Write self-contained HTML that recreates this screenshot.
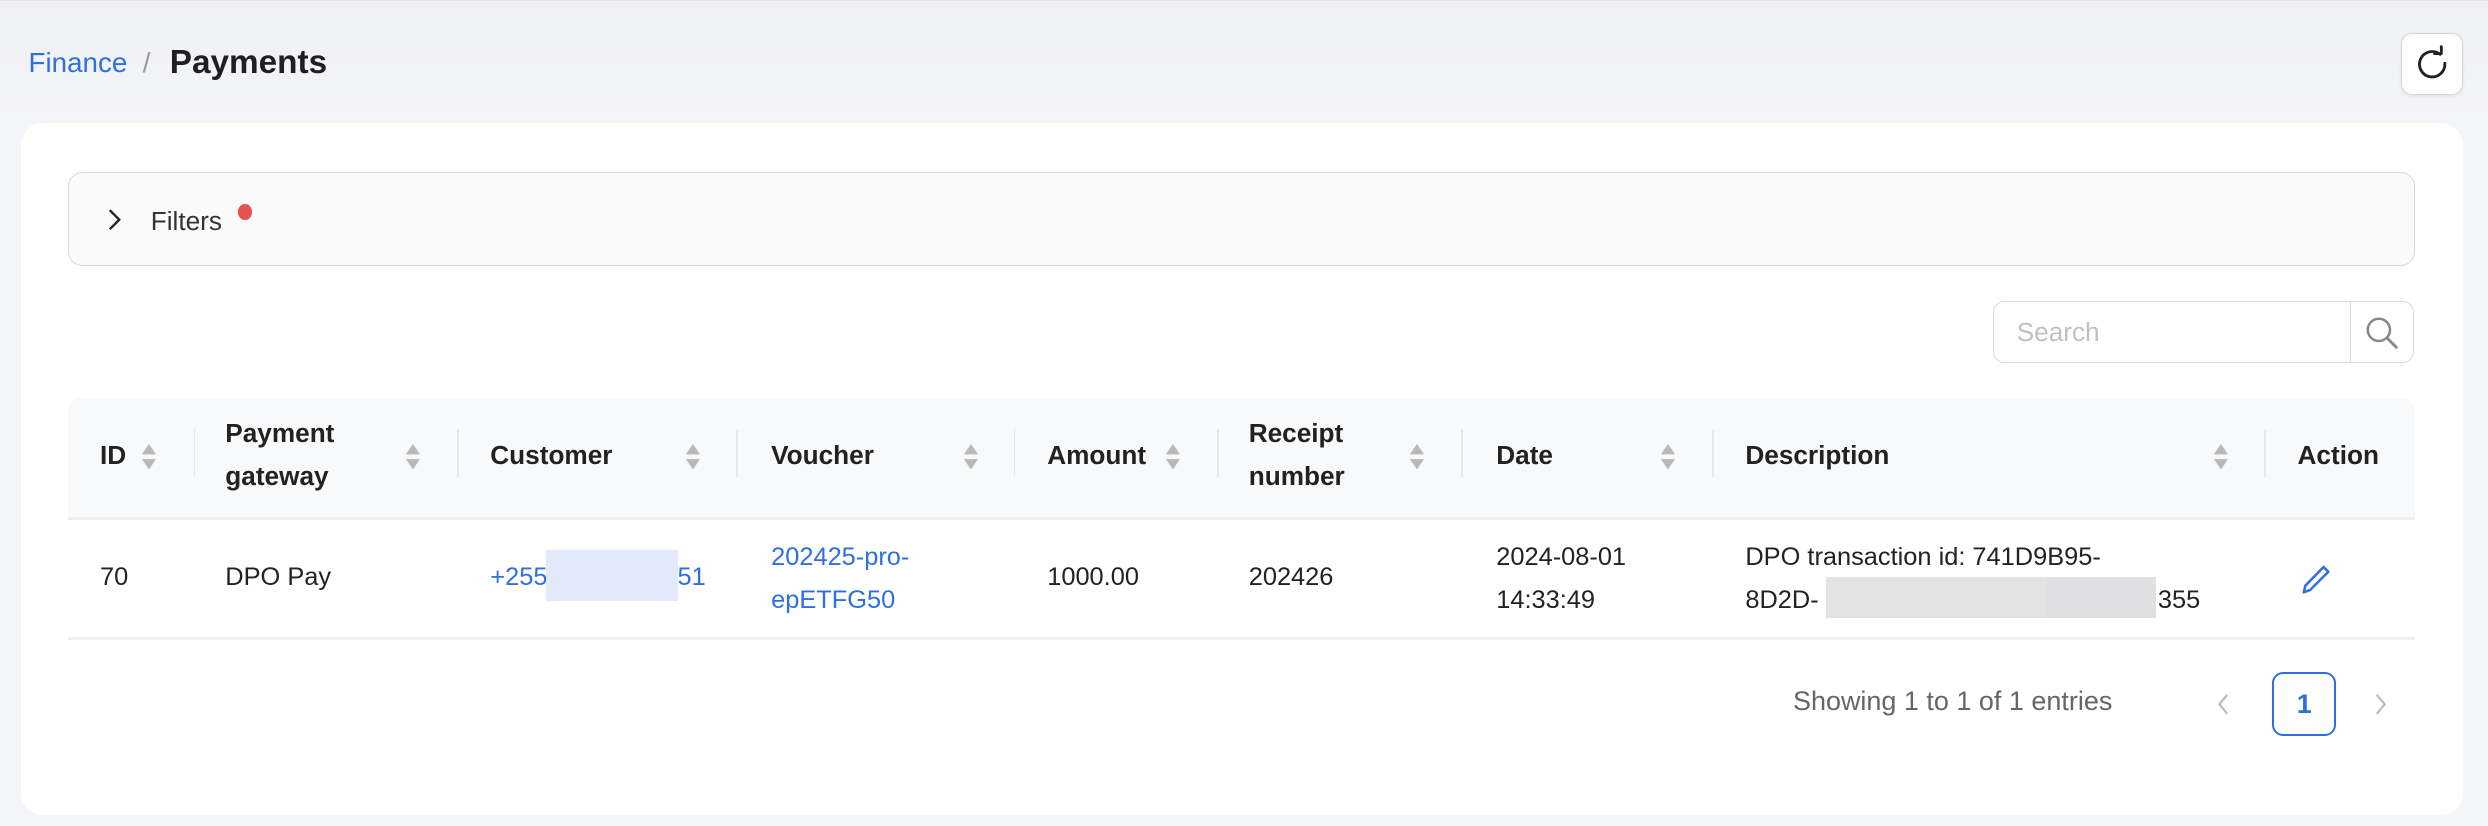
<!DOCTYPE html>
<html><head><meta charset="utf-8"><style>
html,body{margin:0;padding:0}
body{width:1568px;height:520.6px;zoom:1.5867;overflow:hidden;position:relative;
background:linear-gradient(#eff0f4 0,#f4f5f9 120px,#f4f5f9 100%);font-family:"Liberation Sans",sans-serif;color:#222;border-top:1px solid #e3e4e8;box-sizing:border-box}
.a{position:absolute;white-space:nowrap}
.card{position:absolute;left:13px;top:77px;width:1539px;height:436px;background:#fff;border-radius:14px}
.th{font-weight:bold;font-size:16.5px;color:#222;line-height:27px}
.td{font-size:16px;color:#222;line-height:27px}
.blue{color:#2f6fe0}
.sep{position:absolute;top:270px;width:1px;height:30px;background:#e6e8eb}
.sort{position:absolute;width:10px;height:16px}
</style></head><body>
<div class="a blue" style="left:18px;top:29px;font-size:17.5px">Finance</div>
<div class="a" style="left:90px;top:29px;font-size:17.5px;color:#999">/</div>
<div class="a" style="left:107px;top:27px;font-size:21px;font-weight:bold;color:#1f1f1f">Payments</div>
<div class="a" style="left:1513px;top:20px;width:38px;height:38px;border:1px solid #d4d4d6;border-radius:7px;background:#fff;box-shadow:0 1px 2px rgba(0,0,0,.06)">
<svg width="38" height="38" viewBox="0 0 38 38" style="position:absolute;left:0;top:0"><path d="M27 18.5A8 8 0 1 1 24 12.8" fill="none" stroke="#222" stroke-width="1.8" stroke-linecap="round"/><path d="M20.5 12.3h4.3V8" fill="none" stroke="#222" stroke-width="1.8" stroke-linecap="round" stroke-linejoin="round"/></svg></div>
<div class="card"></div>
<div class="a" style="left:43px;top:108px;width:1478px;height:58px;border:1px solid #d9d9d9;border-radius:9px;background:#fafafa"></div>
<svg class="a" style="left:66px;top:130px" width="12" height="16" viewBox="0 0 12 16"><path d="M3 2l6 6-6 6" fill="none" stroke="#222" stroke-width="1.5"/></svg>
<div class="a" style="left:95px;top:129px;font-size:16.5px;color:#333">Filters</div>
<div class="a" style="left:150px;top:128px;width:9px;height:10px;border-radius:50%;background:#e95151"></div>
<div class="a" style="left:1256px;top:189px;width:264px;height:38px;border:1px solid #d9d9d9;border-radius:7px;background:#fff"></div>
<div class="a" style="left:1481px;top:190px;width:1px;height:38px;background:#d9d9d9"></div>
<div class="a" style="left:1271px;top:199px;font-size:16.5px;color:#c0c0c0">Search</div>
<svg class="a" style="left:1489px;top:197px" width="24" height="24" viewBox="0 0 24 24"><circle cx="10" cy="10" r="7" fill="none" stroke="#888" stroke-width="1.6"/><path d="M15 15l6 6" stroke="#888" stroke-width="1.8" stroke-linecap="round"/></svg>
<div class="a" style="left:43px;top:250px;width:1479px;height:75px;background:#f8f9fa;border-radius:8px 8px 0 0;border-bottom:2px solid #eeeff1"></div>
<div class="a" style="left:43px;top:401px;width:1479px;height:2px;background:#eeeff1"></div>
<div class="sep" style="left:122px"></div><div class="sep" style="left:288px"></div><div class="sep" style="left:464px"></div><div class="sep" style="left:639px"></div><div class="sep" style="left:767px"></div><div class="sep" style="left:921px"></div><div class="sep" style="left:1079px"></div><div class="sep" style="left:1427px"></div>
<div class="a th" style="left:63px;top:273px">ID</div>
<div class="a th" style="left:142px;top:259px">Payment<br>gateway</div>
<div class="a th" style="left:309px;top:273px">Customer</div>
<div class="a th" style="left:486px;top:273px">Voucher</div>
<div class="a th" style="left:660px;top:273px">Amount</div>
<div class="a th" style="left:787px;top:259px">Receipt<br>number</div>
<div class="a th" style="left:943px;top:273px">Date</div>
<div class="a th" style="left:1100px;top:273px">Description</div>
<div class="a th" style="left:1448px;top:273px">Action</div>
<svg width="0" height="0" style="position:absolute"><defs><g id="s"><path d="M5 0L9.5 6.5H0.5Z M0.5 9.5H9.5L5 16Z" fill="#b8b8b8"/></g></defs></svg>
<svg class="sort" style="left:89px;top:279px"><use href="#s"/></svg>
<svg class="sort" style="left:255px;top:279px"><use href="#s"/></svg>
<svg class="sort" style="left:432px;top:279px"><use href="#s"/></svg>
<svg class="sort" style="left:607px;top:279px"><use href="#s"/></svg>
<svg class="sort" style="left:734px;top:279px"><use href="#s"/></svg>
<svg class="sort" style="left:888px;top:279px"><use href="#s"/></svg>
<svg class="sort" style="left:1046px;top:279px"><use href="#s"/></svg>
<svg class="sort" style="left:1395px;top:279px"><use href="#s"/></svg>
<div class="a td" style="left:63px;top:350px">70</div>
<div class="a td" style="left:142px;top:350px">DPO Pay</div>
<div class="a td blue" style="left:309px;top:350px">+255</div>
<div class="a td blue" style="left:427px;top:350px">51</div>
<div class="a" style="left:344px;top:346px;width:83px;height:32px;background:#e1e9fb"></div>
<div class="a td blue" style="left:486px;top:337px">202425-pro-<br>epETFG50</div>
<div class="a td" style="left:660px;top:350px">1000.00</div>
<div class="a td" style="left:787px;top:350px">202426</div>
<div class="a td" style="left:943px;top:337px">2024-08-01<br>14:33:49</div>
<div class="a td" style="left:1100px;top:337px">DPO transaction id: 741D9B95-<br>8D2D-</div>
<div class="a td" style="left:1360px;top:364px">355</div>
<div class="a" style="left:1151px;top:363px;width:139px;height:26px;background:#e3e3e3"></div>
<div class="a" style="left:1290px;top:363px;width:69px;height:26px;background:#e0e0e2"></div>
<svg class="a" style="left:1449px;top:354px" width="22" height="22" viewBox="0 0 22 22"><path d="M15.5 2.5l3 3L7 17l-4 1.5 1-4.2z" fill="none" stroke="#2f6fe0" stroke-width="1.6" stroke-linejoin="round"/></svg>
<div class="a" style="left:1130px;top:432px;font-size:17px;color:#666">Showing 1 to 1 of 1 entries</div>
<svg class="a" style="left:1395px;top:434px" width="12" height="18" viewBox="0 0 12 18"><path d="M9 3L4 9l5 6" fill="none" stroke="#bbb" stroke-width="1.4"/></svg>
<div class="a" style="left:1432px;top:423px;width:38px;height:38px;border:1.5px solid #2f6fe0;border-radius:7px;text-align:center;line-height:38px;color:#2f6fe0;font-weight:bold;font-size:17px">1</div>
<svg class="a" style="left:1495px;top:434px" width="12" height="18" viewBox="0 0 12 18"><path d="M3 3l5 6-5 6" fill="none" stroke="#bbb" stroke-width="1.4"/></svg>
</body></html>
